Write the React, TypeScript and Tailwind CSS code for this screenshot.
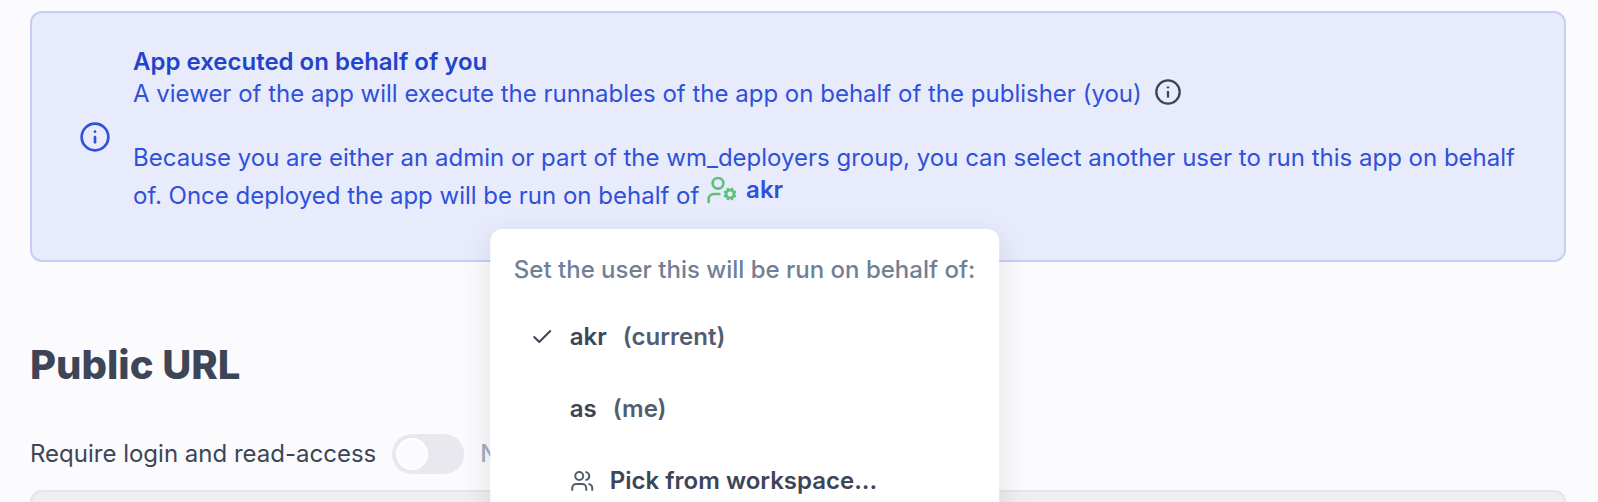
import { useState } from 'react'
import { Check, Info, UserCog, Users } from 'lucide-react'

interface UserOption {
    name: string
    note: string
}

const users: UserOption[] = [
    { name: 'akr', note: '(current)' },
    { name: 'as', note: '(me)' },
]

interface OnBehalfMenuProps {
    selected: string
    onSelect: (name: string) => void
}

function OnBehalfMenu({ selected, onSelect }: OnBehalfMenuProps) {
    return (
        <div className="absolute top-full left-1/2 z-10 mt-[23px] -translate-x-1/2 rounded-xl bg-white p-6 whitespace-nowrap shadow-[0_8px_32px_rgba(0,0,0,0.1)]">
            <p className="h-9 pt-px font-medium text-[#718096]">Set the user this will be run on behalf of:</p>
            <div className="mt-3 flex flex-col">
                {users.map((user) => (
                    <button
                        key={user.name}
                        type="button"
                        onClick={() => onSelect(user.name)}
                        className="flex h-[72px] items-center px-4 font-semibold text-[#3d4556]"
                    >
                        <span className="flex w-10 items-center">
                            {selected === user.name && <Check className="size-6" strokeWidth={2} />}
                        </span>
                        {user.name}
                        <span className="ml-4 text-[#525d70]">{user.note}</span>
                    </button>
                ))}
                <button type="button" className="flex h-[72px] items-center gap-4 px-4 font-semibold text-[#3d4556]">
                    <Users className="ml-10 size-6 text-[#525d70]" strokeWidth={2} />
                    Pick from workspace...
                </button>
            </div>
        </div>
    )
}

function BehalfAlert() {
    const [selected, setSelected] = useState('akr')
    const [open, setOpen] = useState(true)

    return (
        <section className="flex min-h-[251px] items-center gap-[22px] rounded-xl border-2 border-[#c7cdf8] bg-[#e8ebfc] py-[33px] pr-10 pl-[47px] text-[#2f51d9]">
            <Info className="size-8 shrink-0" strokeWidth={2} />
            <div className="min-w-0 flex-1 self-start">
                <h3 className="font-semibold text-[#2244c9]">App executed on behalf of you</h3>
                <p>
                    A viewer of the app will execute the runnables of the app on behalf of the publisher (you)
                    <Info className="ml-3 inline size-7 align-[-4px] text-[#3d4556]" strokeWidth={2} />
                </p>
                <p className="mt-8">
                    Because you are either an admin or part of the wm_deployers group, you can select another user to
                    run this app on behalf of. Once deployed the app will be run on behalf of{' '}
                    <span className="relative inline-flex align-[-2px]">
                        <button
                            type="button"
                            onClick={() => setOpen(!open)}
                            className="flex items-center gap-2 font-semibold"
                        >
                            <UserCog className="size-8 text-[#5cc274]" strokeWidth={2} />
                            {selected}
                        </button>
                        {open && <OnBehalfMenu selected={selected} onSelect={setSelected} />}
                    </span>
                </p>
            </div>
        </section>
    )
}

function PublicUrl() {
    const [locked, setLocked] = useState(false)

    return (
        <section className="mt-[79px]">
            <h2 className="text-[40px] leading-12 font-extrabold text-[#3d4556]">Public URL</h2>
            <label className="mt-[45px] flex items-center gap-4 text-[#3d4556]">
                Require login and read-access
                <input
                    type="checkbox"
                    checked={locked}
                    onChange={() => setLocked(!locked)}
                    className="peer sr-only"
                />
                <span className="flex h-10 w-[72px] items-center rounded-full bg-[#e8e8ee] p-1 peer-checked:justify-end peer-checked:bg-blue-500">
                    <span className="size-8 rounded-full border-2 border-white bg-[#fbfbfd]" />
                </span>
                <span className="font-medium text-[#a0aec0]">No login required</span>
            </label>
            <div className="mt-4 h-40 rounded-xl border-2 border-[#e5e5ea] bg-[#eeeef3]" />
        </section>
    )
}

export default function App() {
    return (
        <main className="h-screen overflow-hidden bg-[#fbfbfd] pt-[11px] pr-8 pl-[30px] font-[Inter,sans-serif] text-2xl leading-8">
            <BehalfAlert />
            <PublicUrl />
        </main>
    )
}
